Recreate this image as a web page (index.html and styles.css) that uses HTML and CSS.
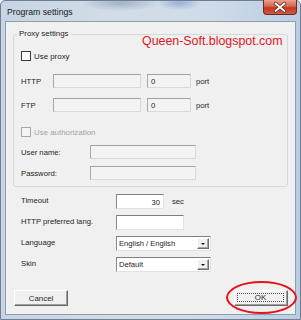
FILE: index.html
```html
<!DOCTYPE html>
<html lang="en">
  <head>
    <meta charset="UTF-8" />
    <title>Program settings</title>
    <link rel="stylesheet" href="styles.css">
  </head>
  <body>
    <div class="window">
      <div class="titlebar">
        <span class="title">Program settings</span>
        <div class="close">
          <svg width="34" height="15" viewBox="0 0 34 15">
            <path d="M12.5 3.5 L21.5 11 M21.5 3.5 L12.5 11" stroke="#5a2a22" stroke-width="3.4" stroke-linecap="round" />
            <path d="M12.5 3.5 L21.5 11 M21.5 3.5 L12.5 11" stroke="#fff" stroke-width="1.8" stroke-linecap="round" />
          </svg>
        </div>
      </div>

      <div class="client">
        <fieldset class="group">
          <legend>Proxy settings</legend>
          <div class="group-body">
            <div class="check-row">
              <span class="box"></span>Use proxy
            </div>
            <div class="proxy-row">
              <span class="lbl">HTTP</span>
              <span class="field off host"></span>
              <span class="field off port">0</span>
              <span class="unit">port</span>
            </div>
            <div class="proxy-row ftp">
              <span class="lbl">FTP</span>
              <span class="field off host"></span>
              <span class="field off port">0</span>
              <span class="unit">port</span>
            </div>
            <div class="check-row auth disabled">
              <span class="box"></span>Use authorization
            </div>
            <div class="auth-row">
              <span class="lbl-wide">User name:</span>
              <span class="field off login"></span>
            </div>
            <div class="auth-row">
              <span class="lbl-wide">Password:</span>
              <span class="field off login"></span>
            </div>
          </div>
        </fieldset>

        <div class="settings">
          <span class="lbl">Timeout</span>
          <div class="ctrl">
            <span class="field num">30</span><span class="unit">sec</span>
          </div>

          <span class="lbl">HTTP preferred lang.</span>
          <div class="ctrl"><span class="field lang"></span></div>

          <span class="lbl">Language</span>
          <div class="ctrl">
            <div class="combo"><span class="combo-text">English / English</span><span class="arrow"></span></div>
          </div>

          <span class="lbl">Skin</span>
          <div class="ctrl">
            <div class="combo"><span class="combo-text">Default</span><span class="arrow"></span></div>
          </div>
        </div>

        <div class="buttons">
          <button class="btn">Cancel</button>
          <button class="btn default"><span class="focus">OK</span></button>
        </div>
      </div>

      <!-- annotations drawn on top of the screenshot -->
      <div class="brand">Queen-Soft.blogspot.com</div>
      <div class="ring"></div>
    </div>
  </body>
</html>
```

FILE: styles.css
```css
* {
  box-sizing: border-box;
}

body {
  margin: 0;
  font-family: "Liberation Sans", Arial, sans-serif;
  font-size: 7.7px;
  color: #1e1e1e;
}

.window {
  position: relative;
  width: 301px;
  height: 320px;
  display: flex;
  flex-direction: column;
  padding: 0 4px 4px 4px;
  border: 1px solid #6f7f92;
  border-radius: 5px 5px 0 0;
  background:
    radial-gradient(ellipse 40px 8px at 120px 2px, rgba(120, 140, 170, 0.55), transparent),
    radial-gradient(ellipse 22px 7px at 178px 2px, rgba(80, 120, 200, 0.45), transparent),
    linear-gradient(to right, #c6d4e3 0%, #d3dde8 40%, #cfdbe8 70%, #b9cde4 100%);
}

.titlebar {
  height: 20px;
  display: flex;
  align-items: center;
  justify-content: space-between;
  padding-left: 2px;
}

.title {
  font-size: 8.7px;
  color: #1a1a1a;
  padding-top: 2px;
}

.close {
  align-self: flex-start;
  width: 34px;
  height: 15px;
  margin-top: -1px;
  margin-right: -1px;
  border: 1px solid #6b2a22;
  border-top: none;
  border-radius: 0 0 4px 4px;
  background: linear-gradient(to bottom, #e9a08e 0%, #d8654e 45%, #c23a22 55%, #d05a3e 100%);
  line-height: 0;
}

.close svg {
  margin-left: -1px;
}

.client {
  flex: 1;
  display: flex;
  flex-direction: column;
  background: #f0f0f0;
  border: 1px solid #8d9db0;
}

.group {
  margin: 7px 7px 0 7px;
  padding: 0;
  min-width: 0;
  border: 1px solid #d3d9de;
  border-radius: 3px;
}

.group legend {
  margin-left: 3px;
  padding: 0 2px;
  line-height: 10px;
  font-size: 7.9px;
}

.group-body {
  display: flex;
  flex-direction: column;
  padding: 11px 0 6px 7px;
}

.check-row {
  height: 12px;
  display: flex;
  align-items: center;
  gap: 3px;
  font-size: 7.9px;
}

.box {
  width: 10px;
  height: 10px;
  background: #fff;
  border: 1px solid #3a3a3a;
}

.check-row.disabled {
  color: #a3a3a3;
}

.check-row.disabled .box {
  background: #f4f4f4;
  border-color: #a8a8a8;
}

.auth {
  margin-top: 14px;
}

.proxy-row {
  margin-top: 12px;
  height: 14px;
  display: flex;
  align-items: center;
}

.proxy-row.ftp {
  margin-top: 10px;
}

.lbl {
  display: block;
}

.proxy-row .lbl {
  width: 32px;
}

.auth-row {
  margin-top: 7px;
  height: 14px;
  display: flex;
  align-items: center;
}

.lbl-wide {
  width: 69px;
}

.field {
  display: block;
  height: 14px;
  padding: 1px 3px 0 3px;
  line-height: 11px;
  background: #fff;
  border: 1px solid #e2e2e2;
  border-top-color: #7f7f7f;
  border-left-color: #8a8a8a;
}

.field.off {
  background: #f3f3f3;
  border-color: #d9d9d9;
  border-top-color: #a2a2a2;
  border-left-color: #a9a9a9;
}

.host {
  width: 88px;
}

.port {
  width: 44px;
  margin-left: 6px;
}

.unit {
  margin-left: 5px;
}

.login {
  width: 106px;
}

.settings {
  margin: 7px 0 0 15px;
  display: grid;
  grid-template-columns: 95px auto;
  grid-auto-rows: 15px;
  row-gap: 6px;
  align-items: center;
}

.settings .lbl {
  margin-top: -3px;
}

.ctrl {
  display: flex;
  align-items: center;
  height: 15px;
}

.settings .field {
  height: 15px;
  padding-top: 2px;
}

.num {
  width: 48px;
  text-align: right;
}

.ctrl .unit {
  margin-left: 8px;
}

.lang {
  width: 68px;
}

.combo {
  width: 95px;
  height: 15px;
  display: flex;
  align-items: center;
  justify-content: space-between;
  background: #fff;
  border: 1px solid #e2e2e2;
  border-top-color: #7f7f7f;
  border-left-color: #8a8a8a;
}

.combo-text {
  padding-left: 2px;
  font-size: 7.6px;
}

.arrow {
  position: relative;
  width: 12px;
  height: 11px;
  margin-right: 1px;
  background: #f0f0f0;
  border: 1px solid #fff;
  border-right-color: #6e6e6e;
  border-bottom-color: #6e6e6e;
  box-shadow: inset -1px -1px 0 #a5a5a5;
}

.arrow::after {
  content: "";
  position: absolute;
  left: 3px;
  top: 4px;
  border-left: 2px solid transparent;
  border-right: 2px solid transparent;
  border-top: 2px solid #111;
}

.buttons {
  margin-top: 18px;
  display: flex;
  justify-content: space-between;
  padding: 0 7px 0 8px;
}

.btn {
  width: 54px;
  height: 16px;
  padding: 0;
  font-family: inherit;
  font-size: 7.9px;
  color: #1e1e1e;
  background: #f0f0f0;
  border: 1px solid #fff;
  border-right-color: #6a6a6a;
  border-bottom-color: #6a6a6a;
  box-shadow: inset -1px -1px 0 #a0a0a0;
}

.btn.default {
  display: flex;
  padding: 2px 3px 3px 2px;
}

.focus {
  flex: 1;
  display: flex;
  align-items: center;
  justify-content: center;
  border: 1px dotted #4a4a4a;
}

.brand {
  position: absolute;
  left: 141px;
  top: 33px;
  font-size: 12.4px;
  line-height: 14px;
  color: #e3141c;
}

.ring {
  position: absolute;
  left: 225px;
  top: 280px;
  width: 71px;
  height: 33px;
  border: 2px solid #e3141c;
  border-radius: 50%;
}
```
